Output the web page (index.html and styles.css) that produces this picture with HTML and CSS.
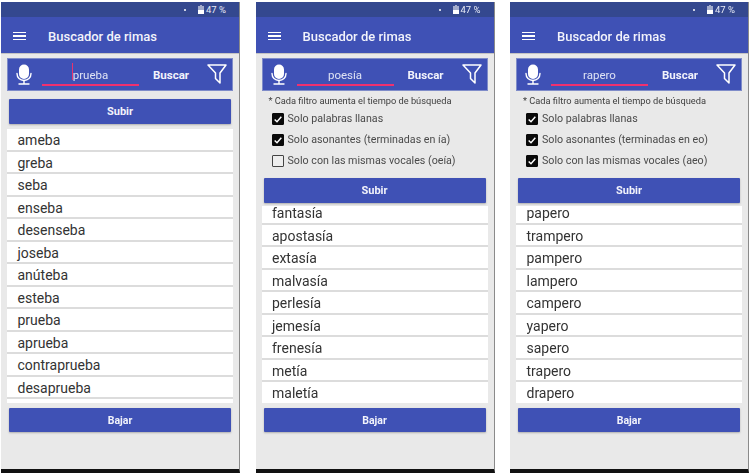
FILE: index.html
```html
<!DOCTYPE html>
<html lang="es">
<head>
  <meta charset="UTF-8">
  <meta name="viewport" content="width=device-width, initial-scale=1.0">
  <title>Buscador de rimas</title>
  <link rel="stylesheet" href="styles.css">
</head>
<body>
  <svg class="icon-defs" width="0" height="0">
    <symbol id="icon-mic" viewBox="0 0 16 21">
      <path d="M8 0.5a5 5 0 0 0-5 5v4.500a5 5 0 0 0 10 0V5.500a5 5 0 0 0-5-5z" fill="#fff"/>
      <path d="M1 9.500c0 4.200 3 7 7 7s7-2.800 7-7" fill="none" stroke="#fff" stroke-width="1.400" stroke-linecap="round"/>
      <path d="M8 16.500v3.500M3 20h10" fill="none" stroke="#fff" stroke-width="1.400" stroke-linecap="round"/>
    </symbol>
    <symbol id="icon-filter" viewBox="0 0 20 20">
      <path d="M1 1h18l-6 8v10l-4.500-4.500V9z" fill="none" stroke="#fff" stroke-width="1.500" stroke-linejoin="round"/>
    </symbol>
    <symbol id="icon-battery" viewBox="0 0 6 9">
      <path d="M2 0h2v1h2v8H0V1h2z" fill="#fff" opacity=".55"/>
      <path d="M0 5h6v4H0z" fill="#fff"/>
    </symbol>
    <symbol id="icon-check" viewBox="0 0 12 12">
      <path d="M2 6.500l2.800 2.700L10 3.400" fill="none" stroke="#fff" stroke-width="1.800"/>
    </symbol>
  </svg>

  <main class="screens">

    <!-- sin filtros -->
    <section class="phone">
      <div class="status"><span class="dot"></span><svg class="battery"><use href="#icon-battery"/></svg><span>47 %</span></div>
      <header class="appbar">
        <div class="menu"><i></i><i></i><i></i></div>
        <h1>Buscador de rimas</h1>
      </header>
      <div class="search">
        <svg class="mic"><use href="#icon-mic"/></svg>
        <div class="field field-caret"><span class="caret"></span>prueba</div>
        <div class="search-btn">Buscar</div>
        <svg class="filter"><use href="#icon-filter"/></svg>
      </div>
      <div class="btn btn-up">Subir</div>
      <ul class="list list-long">
        <li>ameba</li>
        <li>greba</li>
        <li>seba</li>
        <li>enseba</li>
        <li>desenseba</li>
        <li>joseba</li>
        <li>anúteba</li>
        <li>esteba</li>
        <li>prueba</li>
        <li>aprueba</li>
        <li>contraprueba</li>
        <li>desaprueba</li>
        <li></li>
      </ul>
      <div class="btn btn-down">Bajar</div>
    </section>

    <!-- dos filtros -->
    <section class="phone">
      <div class="status"><span class="dot"></span><svg class="battery"><use href="#icon-battery"/></svg><span>47 %</span></div>
      <header class="appbar">
        <div class="menu"><i></i><i></i><i></i></div>
        <h1>Buscador de rimas</h1>
      </header>
      <div class="search">
        <svg class="mic"><use href="#icon-mic"/></svg>
        <div class="field">poesía</div>
        <div class="search-btn">Buscar</div>
        <svg class="filter"><use href="#icon-filter"/></svg>
      </div>
      <div class="filters">
        <p class="note">* Cada filtro aumenta el tiempo de búsqueda</p>
        <div class="opt"><span class="box on"><svg><use href="#icon-check"/></svg></span>Solo palabras llanas</div>
        <div class="opt"><span class="box on"><svg><use href="#icon-check"/></svg></span>Solo asonantes (terminadas en ía)</div>
        <div class="opt"><span class="box"></span>Solo con las mismas vocales (oeía)</div>
      </div>
      <div class="btn btn-up">Subir</div>
      <ul class="list list-short">
        <li>fantasía</li>
        <li>apostasía</li>
        <li>extasía</li>
        <li>malvasía</li>
        <li>perlesía</li>
        <li>jemesía</li>
        <li>frenesía</li>
        <li>metía</li>
        <li>maletía</li>
      </ul>
      <div class="btn btn-down">Bajar</div>
    </section>

    <!-- todos los filtros -->
    <section class="phone">
      <div class="status"><span class="dot"></span><svg class="battery"><use href="#icon-battery"/></svg><span>47 %</span></div>
      <header class="appbar">
        <div class="menu"><i></i><i></i><i></i></div>
        <h1>Buscador de rimas</h1>
      </header>
      <div class="search">
        <svg class="mic"><use href="#icon-mic"/></svg>
        <div class="field">rapero</div>
        <div class="search-btn">Buscar</div>
        <svg class="filter"><use href="#icon-filter"/></svg>
      </div>
      <div class="filters">
        <p class="note">* Cada filtro aumenta el tiempo de búsqueda</p>
        <div class="opt"><span class="box on"><svg><use href="#icon-check"/></svg></span>Solo palabras llanas</div>
        <div class="opt"><span class="box on"><svg><use href="#icon-check"/></svg></span>Solo asonantes (terminadas en eo)</div>
        <div class="opt"><span class="box on"><svg><use href="#icon-check"/></svg></span>Solo con las mismas vocales (aeo)</div>
      </div>
      <div class="btn btn-up">Subir</div>
      <ul class="list list-short">
        <li>papero</li>
        <li>trampero</li>
        <li>pampero</li>
        <li>lampero</li>
        <li>campero</li>
        <li>yapero</li>
        <li>sapero</li>
        <li>trapero</li>
        <li>drapero</li>
      </ul>
      <div class="btn btn-down">Bajar</div>
    </section>

  </main>
</body>
</html>
```

FILE: styles.css
```css
* {
  box-sizing: border-box;
}
body {
  margin: 0;
  background-color: #fff;
  font-family: Roboto, "Liberation Sans", sans-serif;
}
.icon-defs {
  display: block;
  height: 0;
}
.screens {
  display: flex;
  gap: 15.5px;
  padding: 2px 0 0 1px;
  filter: blur(0.35px);
}
.phone {
  width: 239px;
  height: 471px;
  display: flex;
  flex-direction: column;
  background-color: #e9e9e9;
  border-right: 1px solid #8a8a8a;
  border-bottom: 4px solid #111;
}
.status {
  height: 15px;
  display: flex;
  align-items: center;
  justify-content: flex-end;
  gap: 2px;
  padding-right: 13px;
  background-color: #34488f;
  color: #e8ebf6;
  font-size: 9.5px;
}
.dot {
  width: 2px;
  height: 2px;
  margin-right: 10px;
  background-color: #fff;
  border-radius: 50%;
}
.battery {
  width: 6px;
  height: 9px;
}
.appbar {
  height: 37px;
  display: flex;
  align-items: center;
  padding: 2px 0 0 12px;
  background-color: #3f51b5;
  border-bottom: 1px solid #c4c4c4;
}
.appbar h1 {
  margin: 0 0 0 22px;
  color: #f2f3fb;
  font-size: 13px;
  font-weight: 500;
}
.menu {
  width: 13px;
  display: flex;
  flex-direction: column;
  gap: 2.2px;
}
.menu i {
  display: block;
  height: 1.5px;
  background-color: #fff;
}
.search {
  height: 33px;
  margin: 4px 6px 0;
  display: flex;
  align-items: center;
  background-color: #3f51b5;
  border: 1px solid #7f8cc9;
}
.mic {
  width: 16px;
  height: 21px;
  margin-left: 8px;
  flex: none;
}
.field {
  width: 97px;
  height: 20px;
  margin: 2px 0 0 10px;
  flex: none;
  color: #dfe3f4;
  font-size: 11.5px;
  line-height: 18px;
  text-align: center;
  border-bottom: 2px solid #f0306f;
}
.field-caret {
  position: relative;
}
.caret {
  position: absolute;
  left: 30px;
  top: -3px;
  width: 1px;
  height: 17px;
  background-color: #e8336e;
}
.search-btn {
  width: 54px;
  margin-left: 5px;
  flex: none;
  color: #f2f3fb;
  font-size: 11.5px;
  font-weight: 700;
  text-align: center;
}
.filter {
  width: 20px;
  height: 20px;
  margin: -1px 0 0 9px;
  flex: none;
}
.filters {
  padding: 3px 0 0 13px;
  color: #3d3d3d;
}
.note {
  margin: 0;
  font-size: 9.25px;
  line-height: 14px;
}
.opt {
  height: 21px;
  display: flex;
  align-items: center;
  gap: 4px;
  margin-left: 3px;
  font-size: 10.7px;
  color: #4a4a4a;
}
.box {
  width: 12px;
  height: 12px;
  flex: none;
  background-color: #eee;
  border: 1px solid #444;
  border-radius: 1px;
}
.box.on {
  background-color: #0a0a0a;
  border-color: #0a0a0a;
}
.box svg {
  display: block;
  width: 10px;
  height: 10px;
}
.btn {
  margin: 0 8px;
  height: 25px;
  display: flex;
  align-items: center;
  justify-content: center;
  background-color: #3f51b5;
  color: #f2f3fb;
  font-size: 11px;
  font-weight: 700;
  border-radius: 1px;
  box-shadow: 0 1px 2px rgba(0, 0, 0, .25);
}
.btn-up {
  margin-top: 8px;
}
.filters + .btn-up {
  margin-top: 7px;
}
.btn-down {
  height: 24px;
  margin-top: 5px;
  font-size: 10.5px;
}
.list {
  list-style: none;
  margin: 5px 6px 0;
  padding: 0;
  height: 274px;
  overflow: hidden;
  background-color: #fff;
}
.list-short {
  height: 197px;
  margin-top: 3px;
}
.list li {
  height: 22.5px;
  padding-left: 10.5px;
  color: #333;
  font-size: 14px;
  line-height: 22px;
  border-bottom: 2px solid #dcdcdc;
}
.list-short li:first-child {
  height: 18.5px;
  line-height: 14px;
}
```
